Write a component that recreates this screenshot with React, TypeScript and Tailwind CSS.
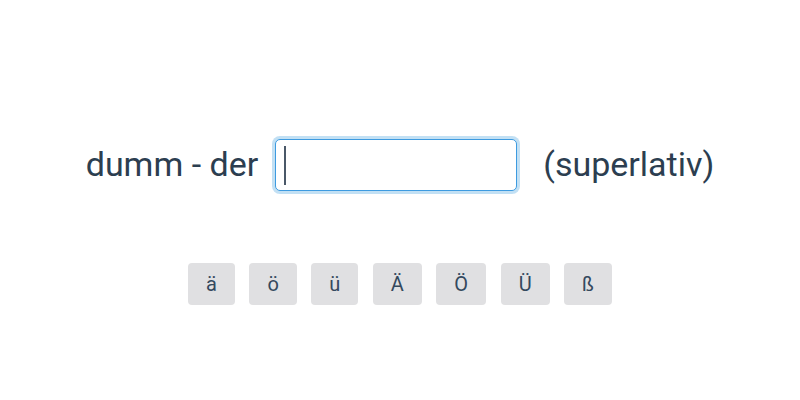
import { useState } from 'react'

const chars = ['ä', 'ö', 'ü', 'Ä', 'Ö', 'Ü', 'ß']

export default function App() {
  const [value, setValue] = useState('')

  return (
    <div
      className="w-full h-[400px] bg-white text-[#2c3e50] flex flex-col items-center pt-[139px]"
      style={{ fontFamily: 'Roboto, "Noto Sans", sans-serif' }}
    >
      <div className="flex items-center">
        <span className="text-[34px] leading-none mr-[17px] -mt-[3px]">dumm - der</span>
        <div className="relative">
          <input
            value={value}
            onChange={(e) => setValue(e.target.value)}
            className="w-[242px] h-[52px] rounded-[5px] border border-[#3d9be0] bg-white px-[9px] text-[31px] text-[#2c3e50] outline-none caret-transparent shadow-[0_0_0_3px_rgba(52,152,219,0.3)]"
          />
          {value === '' && (
            <span className="absolute left-[9px] top-[7px] w-[1.5px] h-[39px] bg-[#4a5868]" />
          )}
        </div>
        <span className="text-[34px] leading-none ml-[26px] -mt-[3px]">(superlativ)</span>
      </div>

      <div className="flex gap-[14.5px] mt-[72px]">
        {chars.map((c) => (
          <button
            key={c}
            onClick={() => setValue(value + c)}
            className="h-[42px] px-[18px] rounded-[4px] bg-[#e0e0e2] text-[20px] text-[#34495e] leading-none"
          >
            {c}
          </button>
        ))}
      </div>
    </div>
  )
}
